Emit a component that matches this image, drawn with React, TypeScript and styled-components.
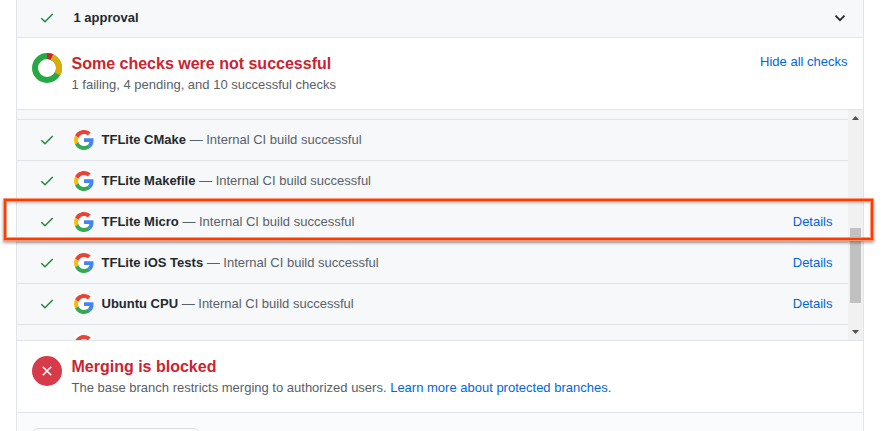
import React from 'react';
import styled, { createGlobalStyle } from 'styled-components';

const Global = createGlobalStyle`
  * { box-sizing: border-box; }
  body { margin: 0; background: #fff; overflow: hidden; }
  #root { height: 431px; }
`;

const Page = styled.main`
  position: relative;
  height: 431px;
  padding: 0 27px 0 16px;
  overflow: hidden;
  font: 13px/20px 'Liberation Sans', Arial, sans-serif;
  color: #24292e;
`;

const Panel = styled.section`
  height: 431px;
  border: solid #e1e4e8;
  border-width: 0 1px;
  background: #fafbfc;
`;

const Approval = styled.div`
  display: flex;
  align-items: center;
  height: 38px;
  padding: 0 15px 2px 22px;
  background: #f6f8fa;
  border-bottom: 1px solid #e1e4e8;
  font-weight: 600;
`;

const ApprovalText = styled.span`
  flex: 1;
  margin-left: 18.5px;
`;

const Status = styled.header`
  display: flex;
  height: 72px;
  padding: 15px 15.5px 0 15px;
  background: #fff;
  border-bottom: 1px solid #e1e4e8;
`;

const StatusText = styled.div`
  flex: 1;
  margin-left: 9.5px;
`;

const Title = styled.h3`
  margin: 0;
  font-size: 16px;
  line-height: 21px;
  font-weight: 600;
  color: #cb2431;
`;

const Muted = styled.p`
  margin: 0;
  line-height: 21px;
  color: #586069;
`;

const Link = styled.a`
  color: #0366d6;
  text-decoration: none;
`;

const HideLink = styled(Link)`
  margin-top: -1px;
`;

const Blocked = styled.div`
  display: grid;
  place-items: center;
  width: 30px;
  height: 30px;
  border-radius: 50%;
  background: #d73a49;
`;

const Checks = styled.div`
  display: flex;
  height: 231px;
  border-bottom: 1px solid #e1e4e8;
  background: #f6f8fa;
`;

const Rows = styled.div`
  flex: 1;
  overflow: hidden;
`;

const PreviousRow = styled.div`
  height: 10px;
  border-bottom: 1px solid #e1e4e8;
`;

const Row = styled.div`
  display: flex;
  align-items: center;
  height: 41px;
  padding: 0 15.5px 0 22px;
  border-bottom: 1px solid #e1e4e8;
`;

const Avatar = styled.span`
  display: grid;
  place-items: center;
  width: 20px;
  height: 20px;
  margin: 0 7.5px 0 19px;
  border-radius: 3px;
  background: #fff;
`;

const RowText = styled.span`
  flex: 1;
  color: #586069;
  white-space: nowrap;
`;

const Name = styled.strong`
  font-weight: 600;
  color: #24292e;
`;

const Scrollbar = styled.div`
  display: flex;
  flex-direction: column;
  align-items: center;
  width: 15px;
  padding: 6px 0;
  background: #f1f1f1;
`;

const Thumb = styled.div`
  width: 11px;
  height: 75px;
  margin: 108px 0 auto;
  background: #c1c1c1;
`;

const MergeButton = styled.button`
  display: block;
  width: 168px;
  height: 34px;
  margin: 15px 0 0 15px;
  border: 1px solid #dcdfe2;
  border-radius: 6px;
  background: #fafbfc;
`;

const Highlight = styled.div`
  position: absolute;
  left: 3px;
  top: 198px;
  width: 871px;
  height: 43px;
  border: 1px solid #ff9876;
  box-shadow: inset 0 0 0 2px #ff3c00, inset 0 0 0 3px #ff9876, 0 2px 3px rgba(0, 0, 0, 0.35),
    inset 0 5px 3px -1px rgba(0, 0, 0, 0.25);
`;

const Check = () => (
  <svg width="16" height="16" viewBox="0 0 16 16" fill="none">
    <path d="M2.3 8.2 6 11.8 13.7 4" stroke="#22863a" strokeWidth="1.5" />
  </svg>
);

const Google = () => (
  <svg width="20" height="20" viewBox="0 0 48 48">
    <path fill="#EA4335" d="M24 9.5c3.54 0 6.71 1.22 9.21 3.6l6.85-6.85C35.9 2.38 30.47 0 24 0 14.62 0 6.51 5.38 2.56 13.22l7.98 6.19C12.43 13.72 17.74 9.5 24 9.5z" />
    <path fill="#4285F4" d="M46.98 24.55c0-1.57-.15-3.09-.38-4.55H24v9.02h12.94c-.58 2.96-2.26 5.48-4.78 7.18l7.73 6c4.51-4.18 7.09-10.36 7.09-17.65z" />
    <path fill="#FBBC05" d="M10.53 28.59c-.48-1.45-.76-2.99-.76-4.59s.27-3.14.76-4.59l-7.98-6.19C.92 16.46 0 20.12 0 24c0 3.88.92 7.54 2.56 10.78l7.97-6.19z" />
    <path fill="#34A853" d="M24 48c6.48 0 11.93-2.13 15.89-5.81l-7.73-6c-2.15 1.45-4.92 2.3-8.16 2.3-6.26 0-11.57-4.22-13.47-9.91l-7.98 6.19C6.51 42.62 14.62 48 24 48z" />
  </svg>
);

const Donut = () => (
  <svg width="30" height="30" viewBox="0 0 30 30" fill="none" strokeWidth="6">
    <circle cx="15" cy="15" r="12" stroke="#28a745" />
    <path d="M15 3A12 12 0 0 1 25.4 21" stroke="#dbab09" />
    <path d="M15 3A12 12 0 0 1 19.9 4.05" stroke="#cb2431" />
  </svg>
);

const Arrow = ({ down = false }: { down?: boolean }) => (
  <svg width="8" height="4" viewBox="0 0 8 4">
    <path d={down ? 'M0 0H7L3.5 4Z' : 'M0 4H7L3.500 0Z'} fill="#505050" />
  </svg>
);

const checks = [
  { name: 'TFLite CMake', details: false },
  { name: 'TFLite Makefile', details: false },
  { name: 'TFLite Micro', details: true },
  { name: 'TFLite iOS Tests', details: true },
  { name: 'Ubuntu CPU', details: true },
  { name: 'Ubuntu Sanity', details: true },
];

export default function App() {
  return (
    <Page>
      <Global />
      <Panel>
        <Approval>
          <Check />
          <ApprovalText>1 approval</ApprovalText>
          <svg width="16" height="16" viewBox="0 0 16 16" fill="none">
            <path d="m3.5 5.700 4.500 4.500L12.500 5.700" stroke="#24292e" strokeWidth="1.7" />
          </svg>
        </Approval>
        <Status>
          <Donut />
          <StatusText>
            <Title>Some checks were not successful</Title>
            <Muted>1 failing, 4 pending, and 10 successful checks</Muted>
          </StatusText>
          <HideLink>Hide all checks</HideLink>
        </Status>
        <Checks>
          <Rows>
            <PreviousRow />
            {checks.map((check) => (
              <Row key={check.name}>
                <Check />
                <Avatar><Google /></Avatar>
                <RowText><Name>{check.name}</Name> — Internal CI build successful</RowText>
                {check.details && <Link>Details</Link>}
              </Row>
            ))}
          </Rows>
          <Scrollbar>
            <Arrow />
            <Thumb />
            <Arrow down />
          </Scrollbar>
        </Checks>
        <Status>
          <Blocked>
            <svg width="16" height="16" viewBox="0 0 16 16" fill="none">
              <path d="m3.800 3.800 8.400 8.400M12.200 3.800l-8.400 8.400" stroke="#fff" strokeWidth="1.6" />
            </svg>
          </Blocked>
          <StatusText>
            <Title>Merging is blocked</Title>
            <Muted>
              The base branch restricts merging to authorized users. <Link>Learn more about protected branches.</Link>
            </Muted>
          </StatusText>
        </Status>
        <MergeButton aria-label="Merge pull request" />
      </Panel>
      <Highlight />
    </Page>
  );
}
